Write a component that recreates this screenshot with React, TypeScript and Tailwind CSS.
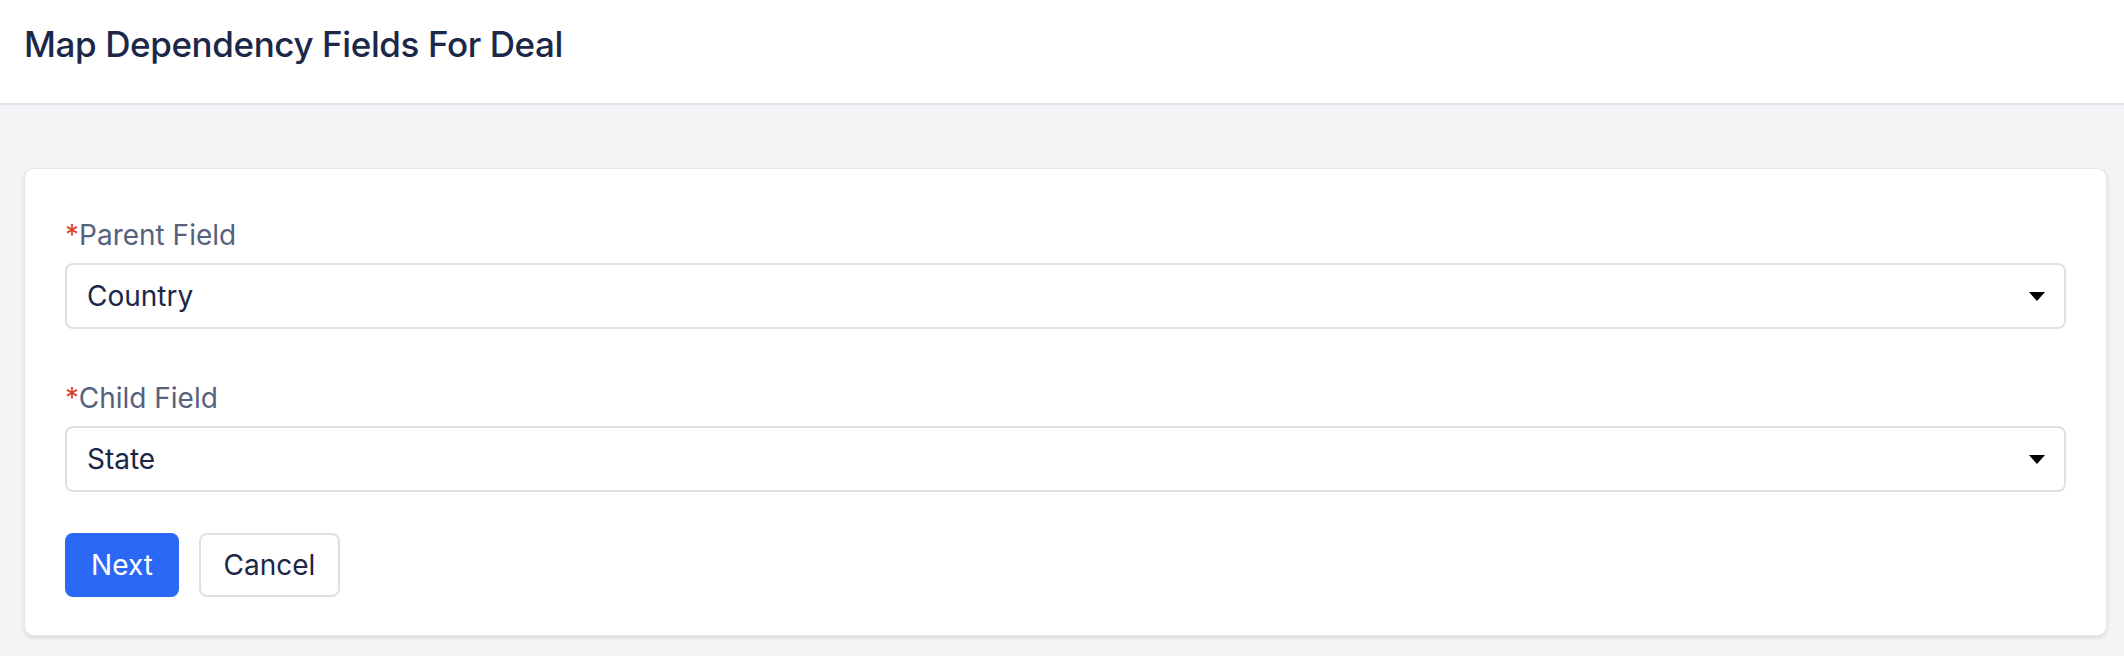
import React from "react";

const font = { fontFamily: "Inter, 'Noto Sans', sans-serif" };

function Caret() {
  return (
    <svg width="16" height="9" viewBox="0 0 16 9" className="shrink-0">
      <path d="M0 0 H16 L8 9 Z" fill="#000" />
    </svg>
  );
}

function SelectField({ label, value, className = "" }: { label: string; value: string; className?: string }) {
  return (
    <div className={className}>
      <label className="block text-[28px] leading-[40px] text-[#56627d]">
        <span className="text-[#d9442b]">*</span>
        {label}
      </label>
      <div className="mt-[8px] flex h-[66px] items-center justify-between rounded-[8px] border-2 border-[#dfe0e6] bg-white pl-[20px] pr-[19px]">
        <span className="text-[28px] text-[#1b2747]">{value}</span>
        <Caret />
      </div>
    </div>
  );
}

export default function App() {
  return (
    <div className="min-h-screen bg-[#f3f4f6]" style={font}>
      <header className="h-[105px] border-b-2 border-[#e1e2e7] bg-white pl-[24px] pt-[20px]">
        <h1 className="text-[35px] font-medium leading-[48px] tracking-[-0.4px] text-[#1c2848]">
          Map Dependency Fields For Deal
        </h1>
      </header>

      <main className="pl-[24px] pr-[17px] pt-[63px]">
        <section className="rounded-[10px] border border-[#e6e7eb] bg-white px-[40px] pb-[38px] pt-[46px] shadow-[0_2px_4px_rgba(15,23,42,0.12)]">
          <SelectField label="Parent Field" value="Country" />
          <SelectField label="Child Field" value="State" className="mt-[49px]" />

          <div className="mt-[41px] flex gap-[20px]">
            <button
              type="button"
              className="h-[64px] w-[114px] rounded-[8px] bg-[#2b68f5] text-[28px] text-white"
            >
              Next
            </button>
            <button
              type="button"
              className="h-[64px] w-[141px] rounded-[8px] border-2 border-[#dfe0e6] bg-white text-[28px] text-[#1b2747]"
            >
              Cancel
            </button>
          </div>
        </section>
      </main>
    </div>
  );
}
